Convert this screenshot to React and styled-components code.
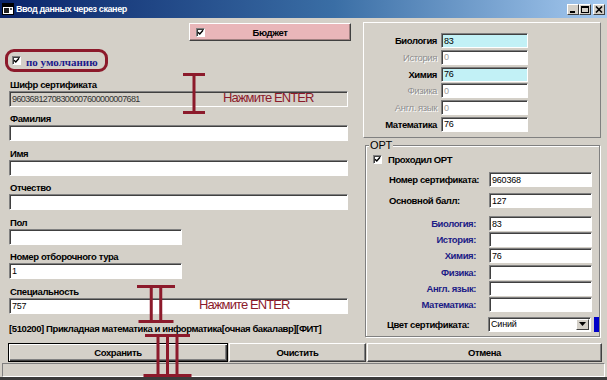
import React from 'react';
import styled, { createGlobalStyle, css } from 'styled-components';

const GlobalStyle = createGlobalStyle`
  html, body {
    margin: 0;
    padding: 0;
    background: #d4d0c8;
  }
  body {
    font-family: "Liberation Sans", Arial, sans-serif;
  }
  * {
    box-sizing: border-box;
  }
`;

const MAROON = '#8c1a2b';

// old Windows bold labels look narrow in the screenshot
const labelFont = css`
  font-size: 9.5px;
  font-weight: bold;
  letter-spacing: -0.4px;
`;

const Window = styled.div`
  position: relative;
  width: 607px;
  height: 380px;
  background: #d4d0c8;
  display: flex;
  flex-direction: column;
  overflow: hidden;
  border-bottom: 3px solid #3c3c3c;
`;

const TitleBar = styled.div`
  height: 18px;
  flex-shrink: 0;
  display: flex;
  align-items: center;
  padding: 0 2px 0 2px;
  background: linear-gradient(to right, #0a246a 0%, #3a6ea5 55%, #a6caf0 100%);
`;

const TitleText = styled.span`
  margin-left: 2px;
  color: #fff;
  font-weight: bold;
  font-size: 9px;
  letter-spacing: -0.4px;
`;

const TitleButtons = styled.div`
  margin-left: auto;
  display: flex;
  align-items: center;
`;

const TitleButton = styled.div`
  width: 12px;
  height: 11px;
  margin-left: ${(p) => (p.$close ? '2px' : '0')};
  background: #d4d0c8;
  border: 1px solid;
  border-color: #fff #404040 #404040 #fff;
  display: flex;
  align-items: center;
  justify-content: center;
`;

const Body = styled.div`
  height: 325px;
  flex-shrink: 0;
  display: flex;
  padding-top: 1px;
`;

const LeftCol = styled.div`
  width: 363px;
  padding: 0 15px 0 9px;
  display: flex;
  flex-direction: column;
`;

const RightCol = styled.div`
  width: 238px;
  display: flex;
  flex-direction: column;
`;

const BudgetButton = styled.div`
  margin: 4px 0 0 180px;
  width: 162px;
  height: 18px;
  display: flex;
  align-items: center;
  padding-left: 6px;
  background: #e9b6b9;
  border: 1px solid;
  border-color: #fff #404040 #404040 #fff;
  box-shadow: inset -1px -1px 0 #a08080;
  ${labelFont}
`;

const BudgetText = styled.span`
  flex: 1;
  text-align: center;
  margin-right: 15px;
`;

const Check = styled.span`
  display: inline-flex;
  align-items: center;
  justify-content: center;
  width: 9px;
  height: 9px;
  flex-shrink: 0;
  background: #fff;
  border: 1px solid;
  border-color: #808080 #fff #fff #808080;
  box-shadow: inset 1px 1px 0 #404040;
`;

const DefaultWrap = styled.div`
  margin: 8px 0 0 -4px;
  width: 103px;
  height: 23px;
  border: 3px solid ${MAROON};
  border-radius: 9px;
  display: flex;
  align-items: center;
  padding: 0 0 0 4px;
  gap: 5px;
`;

const DefaultLabel = styled.span`
  font-family: "Liberation Serif", "Times New Roman", serif;
  font-weight: bold;
  font-size: 11px;
  color: #1a1a8a;
  margin-top: 2px;
`;

const Field = styled.div`
  margin-top: 5.5px;
  display: flex;
  flex-direction: column;
`;

const FieldLabel = styled.div`
  height: 13px;
  line-height: 13px;
  padding-left: 1px;
  ${labelFont}
`;

const Input = styled.div`
  width: ${(p) => (p.$w ? `${p.$w}px` : '100%')};
  height: ${(p) => (p.$h ? `${p.$h}px` : '16px')};
  flex-shrink: 0;
  background: ${(p) => p.$bg || '#fff'};
  border: 1px solid;
  border-color: #808080 #fff #fff #808080;
  box-shadow: inset 1px 1px 0 #404040;
  padding: 0 2px;
  display: flex;
  align-items: center;
  font-size: 9px;
  letter-spacing: ${(p) => (p.$tight ? '-0.6px' : '-0.2px')};
  color: ${(p) => p.$color || '#000'};
  white-space: nowrap;
  overflow: hidden;
`;

const SpecialtyText = styled.div`
  margin-top: 8px;
  height: 13px;
  line-height: 13px;
  white-space: nowrap;
  ${labelFont}
`;

const ScorePanel = styled.div`
  margin-top: 3px;
  height: 116px;
  border: 1px solid;
  border-color: #fff #808080 #808080 #fff;
  padding-top: 10px;
  display: flex;
  flex-direction: column;
  gap: 1.8px;
`;

const ScoreRow = styled.div`
  display: flex;
  align-items: center;
  height: 15px;
`;

const ScoreLabel = styled.span`
  width: 73px;
  margin-right: 4px;
  text-align: right;
  ${labelFont}
  font-weight: ${(p) => (p.$off ? 'normal' : 'bold')};
  color: ${(p) => (p.$off ? '#8e8e8e' : '#000')};
  text-shadow: ${(p) => (p.$off ? '1px 1px 0 #fff' : 'none')};
`;

const Group = styled.fieldset`
  margin: 1px 0 0 2px;
  padding: 0;
  width: 235px;
  height: 198px;
  min-width: 0;
  border: 1px solid #808080;
  box-shadow: inset 1px 1px 0 #fff, 1px 1px 0 #fff;
`;

const Legend = styled.legend`
  margin-left: 3px;
  padding: 0 1px;
  font-size: 11px;
  line-height: 12px;
  background: #d4d0c8;
`;

const OrtCheckRow = styled.div`
  margin: 2px 0 0 7px;
  height: 12px;
  display: flex;
  align-items: center;
  gap: 6px;
  ${labelFont}
`;

const FormRow = styled.div`
  margin-top: ${(p) => p.$mt}px;
  height: 15px;
  display: flex;
  align-items: center;
`;

const FormLabel = styled.span`
  width: 110px;
  margin-right: 13px;
  padding-left: ${(p) => (p.$right ? '0' : `${p.$pl || 23}px`)};
  text-align: ${(p) => (p.$right ? 'right' : 'left')};
  color: ${(p) => (p.$right ? '#1c1c86' : '#000')};
  white-space: nowrap;
  ${labelFont}
`;

const Select = styled(Input)`
  padding-right: 1px;
  justify-content: space-between;
`;

const SelectArrow = styled.span`
  width: 13px;
  height: 11px;
  background: #d4d0c8;
  border: 1px solid;
  border-color: #fff #404040 #404040 #fff;
  display: flex;
  align-items: center;
  justify-content: center;
`;

const Swatch = styled.span`
  margin-left: 3px;
  width: 5px;
  height: 15px;
  background: #0000c8;
`;

const ButtonBar = styled.div`
  height: 19px;
  flex-shrink: 0;
  display: flex;
  gap: 1px;
  padding-left: 8px;
`;

const Button = styled.div`
  width: ${(p) => p.$w}px;
  height: 19px;
  display: flex;
  align-items: center;
  justify-content: center;
  background: #d4d0c8;
  ${labelFont}
  border: 1px solid;
  border-color: ${(p) => (p.$primary ? '#000' : '#fff #404040 #404040 #fff')};
  box-shadow: ${(p) =>
    p.$primary
      ? 'inset 1px 1px 0 #fff, inset -1px -1px 0 #404040, inset -2px -2px 0 #808080'
      : 'inset -1px -1px 0 #808080'};
`;

const StatusBar = styled.div`
  margin: 1px 2px 0 2px;
  height: 14px;
  border: 1px solid;
  border-color: #808080 #fff #fff #808080;
`;

const Mark = styled.svg`
  position: absolute;
  left: ${(p) => p.$x}px;
  top: ${(p) => p.$y}px;
  overflow: visible;
`;

const EnterNote = styled.span`
  position: absolute;
  left: ${(p) => p.$x}px;
  top: ${(p) => p.$y}px;
  color: ${MAROON};
  font-size: 13px;
  letter-spacing: -0.9px;
  line-height: 14px;
  white-space: nowrap;
`;

const CheckMark = () => (
  <svg width="7" height="7" viewBox="0 0 7 7">
    <path d="M1 3.2 L2.8 5 L6 1.2" fill="none" stroke="#000" strokeWidth="1.4" />
  </svg>
);

const Beam = ({ x, y, width, height, lines, bottomWidth }) => {
  const bw = bottomWidth || width;
  const step = lines > 1 ? 9.5 : 0;
  const start = width / 2 - ((lines - 1) * step) / 2;
  return (
    <Mark $x={x} $y={y} width={width} height={height}>
      <rect x="0" y="0" width={width} height="3" fill={MAROON} />
      {Array.from({ length: lines }).map((_, i) => (
        <rect key={i} x={start + i * step - 1.5} y="1" width="3" height={height - 2} fill={MAROON} />
      ))}
      <rect x={(width - bw) / 2} y={height - 3} width={bw} height="3" fill={MAROON} />
    </Mark>
  );
};

const scores = [
  { name: 'Биология', value: '83', bg: '#c2f1f6' },
  { name: 'История', value: '0', off: true },
  { name: 'Химия', value: '76', bg: '#c2f1f6' },
  { name: 'Физика', value: '0', off: true },
  { name: 'Англ. язык', value: '0', off: true },
  { name: 'Математика', value: '76' },
];

const ortSubjects = [
  { name: 'Биология:', value: '83' },
  { name: 'История:', value: '' },
  { name: 'Химия:', value: '76' },
  { name: 'Физика:', value: '' },
  { name: 'Англ. язык:', value: '' },
  { name: 'Математика:', value: '' },
];

const App = () => {
  return (
    <>
      <GlobalStyle />
      <Window>
        <TitleBar>
          <svg width="12" height="12" viewBox="0 0 12 12">
            <rect x="0.5" y="0.5" width="11" height="11" fill="#fff" stroke="#000" />
            <rect x="1" y="1" width="10" height="3" fill="#000" />
            <rect x="2" y="5" width="5" height="5" fill="#222" />
            <rect x="8" y="5" width="2" height="2" fill="#555" />
          </svg>
          <TitleText>Ввод данных через сканер</TitleText>
          <TitleButtons>
            <TitleButton>
              <svg width="8" height="7" viewBox="0 0 8 7">
                <rect x="1" y="5" width="5" height="2" fill="#000" />
              </svg>
            </TitleButton>
            <TitleButton>
              <svg width="8" height="7" viewBox="0 0 8 7">
                <rect x="0.5" y="0.5" width="7" height="6" fill="none" stroke="#000" />
                <rect x="0" y="0" width="8" height="2" fill="#000" />
              </svg>
            </TitleButton>
            <TitleButton $close>
              <svg width="8" height="7" viewBox="0 0 8 7">
                <path d="M1 0.5 L7 6.5 M7 0.5 L1 6.5" stroke="#000" strokeWidth="1.6" />
              </svg>
            </TitleButton>
          </TitleButtons>
        </TitleBar>

        <Body>
          <LeftCol>
            <BudgetButton>
              <Check>
                <CheckMark />
              </Check>
              <BudgetText>Бюджет</BudgetText>
            </BudgetButton>

            <DefaultWrap>
              <Check>
                <CheckMark />
              </Check>
              <DefaultLabel>по умолчанию</DefaultLabel>
            </DefaultWrap>

            <Field>
              <FieldLabel>Шифр сертификата</FieldLabel>
              <Input $bg="#d4d0c8" $color="#333" $tight>
                96036812708300007600000007681
              </Input>
            </Field>
            <Field>
              <FieldLabel>Фамилия</FieldLabel>
              <Input />
            </Field>
            <Field>
              <FieldLabel>Имя</FieldLabel>
              <Input />
            </Field>
            <Field>
              <FieldLabel>Отчество</FieldLabel>
              <Input />
            </Field>
            <Field>
              <FieldLabel>Пол</FieldLabel>
              <Input $w={173} />
            </Field>
            <Field>
              <FieldLabel>Номер отборочного тура</FieldLabel>
              <Input $w={173}>1</Input>
            </Field>
            <Field>
              <FieldLabel>Специальность</FieldLabel>
              <Input>757</Input>
            </Field>
            <SpecialtyText>
              [510200] Прикладная математика и информатика[очная бакалавр][ФИТ]
            </SpecialtyText>
          </LeftCol>

          <RightCol>
            <ScorePanel>
              {scores.map((s) => (
                <ScoreRow key={s.name}>
                  <ScoreLabel $off={s.off}>{s.name}</ScoreLabel>
                  <Input $w={87} $h={15} $bg={s.bg} $color={s.off ? '#9a9a9a' : '#000'}>
                    {s.value}
                  </Input>
                </ScoreRow>
              ))}
            </ScorePanel>

            <Group>
              <Legend>ОРТ</Legend>
              <OrtCheckRow>
                <Check>
                  <CheckMark />
                </Check>
                Проходил ОРТ
              </OrtCheckRow>
              <FormRow $mt={7}>
                <FormLabel>Номер сертификата:</FormLabel>
                <Input $w={103} $h={15}>960368</Input>
              </FormRow>
              <FormRow $mt={6}>
                <FormLabel>Основной балл:</FormLabel>
                <Input $w={103} $h={15}>127</Input>
              </FormRow>
              {ortSubjects.map((s, i) => (
                <FormRow key={s.name} $mt={i === 0 ? 8 : 1.2}>
                  <FormLabel $right>{s.name}</FormLabel>
                  <Input $w={103} $h={15}>{s.value}</Input>
                </FormRow>
              ))}
              <FormRow $mt={5}>
                <FormLabel $pl={21}>Цвет сертификата:</FormLabel>
                <Select $w={103} $h={15}>
                  <span>Синий</span>
                  <SelectArrow>
                    <svg width="7" height="4" viewBox="0 0 7 4">
                      <path d="M0 0 L7 0 L3.5 4 Z" fill="#000" />
                    </svg>
                  </SelectArrow>
                </Select>
                <Swatch />
              </FormRow>
            </Group>
          </RightCol>
        </Body>

        <ButtonBar>
          <Button $w={220} $primary>Сохранить</Button>
          <Button $w={137}>Очистить</Button>
          <Button $w={235}>Отмена</Button>
        </ButtonBar>
        <StatusBar />

        <Beam x={183} y={73} width={22} height={41} lines={1} />
        <EnterNote $x={223} $y={91}>Нажмите ENTER</EnterNote>
        <Beam x={137} y={285} width={38} height={38} lines={2} bottomWidth={35} />
        <EnterNote $x={199} $y={298}>Нажмите ENTER</EnterNote>
        <Beam x={145} y={334} width={45} height={43} lines={3} bottomWidth={48} />
      </Window>
    </>
  );
};

export default App;
